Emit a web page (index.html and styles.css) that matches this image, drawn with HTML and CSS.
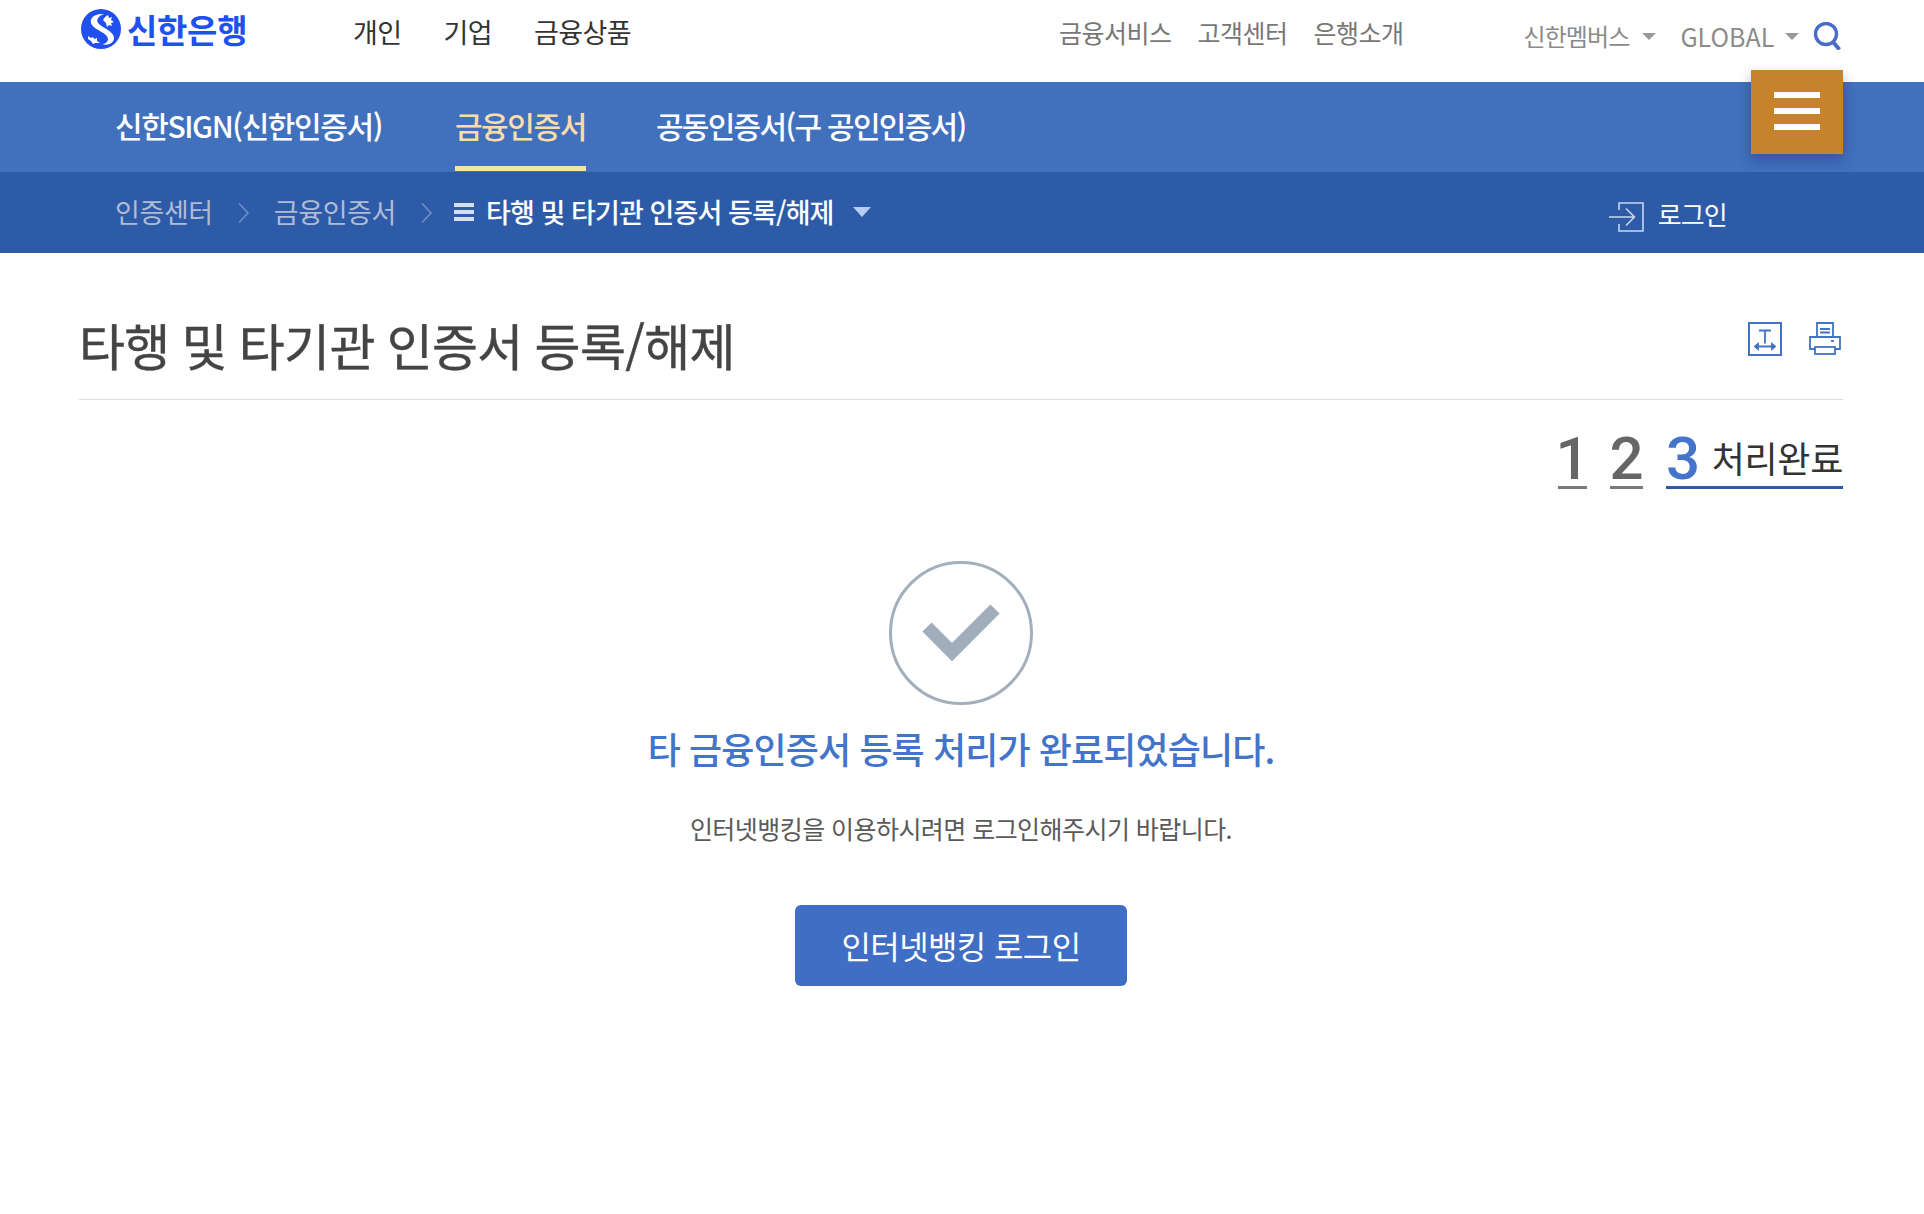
FILE: index.html
```html
<!DOCTYPE html>
<html lang="ko">
<head>
<meta charset="utf-8">
<title>타행 및 타기관 인증서 등록/해제</title>
<link rel="stylesheet" href="styles.css">
</head>
<body>
<header class="top">
  <a class="logo">
    <svg class="logo-mark" viewBox="0 0 40 40" aria-hidden="true">
      <circle cx="20" cy="20" r="20" fill="#2150f0"/>
      <path d="M23 5C13 4 7 10 11 16c3 5 16 8 16 14 0 3-3 5-6 5 6 2 12-1 12-6 0-7-12-10-16-15-2-3 0-7 6-9z" fill="#fff"/>
      <path d="M24 8l3-2 1 3 3-1-1 3 3 2-3 1 1 3-3-1-2 2-1-4-3-3z" fill="#fff"/>
      <path d="M7 27l3 2 2-1 1 2 3-1 0 3 3 2-5 0-2 1-2-3-3-2z" fill="#fff"/>
    </svg>
    <span class="logo-text">신한은행</span>
  </a>
  <nav class="gnb">
    <a>개인</a>
    <a>기업</a>
    <a>금융상품</a>
  </nav>
  <nav class="util">
    <a>금융서비스</a>
    <a>고객센터</a>
    <a>은행소개</a>
  </nav>
  <div class="extra">
    <a class="drop member">신한멤버스</a>
    <a class="drop global">GLOBAL</a>
    <svg class="search" viewBox="0 0 28 28" aria-hidden="true">
      <circle cx="13" cy="12" r="10.500" fill="none" stroke="#4a6cc8" stroke-width="3.400"/>
      <path d="M20 20l6.500 7.500" stroke="#4a6cc8" stroke-width="4" fill="none"/>
    </svg>
  </div>
  <button class="menu-btn" aria-label="전체메뉴"><i></i><i></i><i></i></button>
</header>
<nav class="tabs">
  <a>신한SIGN(신한인증서)</a>
  <a class="on">금융인증서</a>
  <a class="last">공동인증서(구 공인인증서)</a>
</nav>
<div class="crumbs">
  <a class="crumb">인증센터</a>
  <svg class="chev" viewBox="0 0 12 22" aria-hidden="true"><path d="M1.500 1.500l9 9.500-9 9.500" fill="none" stroke="#6f8fc6" stroke-width="1.600"/></svg>
  <a class="crumb">금융인증서</a>
  <svg class="chev" viewBox="0 0 12 22" aria-hidden="true"><path d="M1.500 1.500l9 9.500-9 9.500" fill="none" stroke="#6f8fc6" stroke-width="1.600"/></svg>
  <span class="lines"><i></i><i></i><i></i></span>
  <a class="current">타행 및 타기관 인증서 등록/해제</a>
  <span class="cur-caret"></span>
  <a class="login">
    <svg class="login-icon" viewBox="0 0 36 30" aria-hidden="true">
      <path d="M10 8V1h24v28H10v-7" fill="none" stroke="#c9d6ee" stroke-width="1.600"/>
      <path d="M0 15h25M17 6.500l8.500 8.500-8.500 8.500" fill="none" stroke="#c9d6ee" stroke-width="1.600"/>
    </svg>
    <span>로그인</span>
  </a>
</div>
<main class="content">
  <div class="title-row">
    <h1>타행 및 타기관 인증서 등록/해제</h1>
    <div class="tools">
      <svg class="tool-t" viewBox="0 0 34 34" aria-hidden="true">
        <rect x="1" y="1" width="32" height="32" fill="none" stroke="#4273c4" stroke-width="2"/>
        <path d="M11 8.500h12M17 8.500v13M7 24.500h20M7 24.500l3-2.500v5zM27 24.500l-3-2.500v5z" fill="none" stroke="#4273c4" stroke-width="1.800"/>
      </svg>
      <svg class="tool-p" viewBox="0 0 32 33" aria-hidden="true">
        <path d="M8 15V1h16v14M11 7h10M11 10.500h10" fill="none" stroke="#4273c4" stroke-width="1.800"/>
        <path d="M6 27H1V15h30v12h-5" fill="none" stroke="#4273c4" stroke-width="1.800"/>
        <rect x="6" y="25" width="20" height="7" fill="none" stroke="#4273c4" stroke-width="1.800"/>
        <path d="M22 19h3" stroke="#4273c4" stroke-width="1.800"/>
      </svg>
    </div>
  </div>
  <ol class="steps">
    <li class="step">1</li>
    <li class="step">2</li>
    <li class="step active">3<span>처리완료</span></li>
  </ol>
  <section class="done">
    <svg class="check" viewBox="0 0 144 144" aria-hidden="true">
      <circle cx="72" cy="72" r="70.500" fill="none" stroke="#a3afbd" stroke-width="3"/>
      <path d="M38 66l25 25 43-43" fill="none" stroke="#a0adbb" stroke-width="13" stroke-linejoin="miter"/>
    </svg>
    <h2>타 금융인증서 등록 처리가 완료되었습니다.</h2>
    <p>인터넷뱅킹을 이용하시려면 로그인해주시기 바랍니다.</p>
    <a class="btn">인터넷뱅킹 로그인</a>
  </section>
</main>
</body>
</html>
```
FILE: styles.css
```css
* { box-sizing: border-box; }
html, body { margin: 0; padding: 0; }
body {
  background: #fff;
  font-family: "Noto Sans CJK KR", "Noto Sans", sans-serif;
  color: #333;
  overflow-x: hidden;
}
a { color: inherit; text-decoration: none; }
ol { list-style: none; margin: 0; padding: 0; }

.top {
  position: relative;
  height: 82px;
  display: flex;
  align-items: flex-start;
  padding-left: 81px;
}
.logo { display: flex; align-items: center; height: 40px; margin-top: 9px; width: 272px; }
.logo-mark { width: 40px; height: 40px; flex: none; }
.logo-text {
  margin-left: 6px;
  font-size: 33px;
  line-height: 40px;
  font-weight: 700;
  letter-spacing: -0.3px;
  color: #2150f0;
  white-space: nowrap;
}
.gnb {
  display: flex;
  gap: 42px;
  margin-top: 14px;
  font-size: 27px;
  line-height: 36px;
  letter-spacing: -0.6px;
  color: #333;
}
.util {
  display: flex;
  gap: 26px;
  margin-left: 428px;
  margin-top: 14px;
  font-size: 25px;
  line-height: 36px;
  letter-spacing: -0.5px;
  color: #777;
}
.extra {
  display: flex;
  align-items: center;
  margin-left: 120px;
  margin-top: 18px;
  color: #8b8b8b;
}
.drop {
  display: flex;
  align-items: center;
  font-size: 24px;
  line-height: 36px;
  letter-spacing: -0.9px;
}
.drop::after {
  content: "";
  border-top: 7px solid #999;
  border-left: 7px solid transparent;
  border-right: 7px solid transparent;
  margin-left: 13px;
}
.member { margin-right: 24px; }
.global { font-size: 25px; letter-spacing: 0; margin-right: 14px; }
.global::after { margin-left: 11px; }
.search { width: 28px; height: 28px; }
.menu-btn {
  position: absolute;
  left: 1751px;
  top: 70px;
  z-index: 2;
  width: 92px;
  height: 84px;
  padding: 22px 23px 0;
  border: 0;
  background: #c6832b;
  box-shadow: 0 6px 12px rgba(20, 40, 90, 0.35);
  display: flex;
  flex-direction: column;
  gap: 10px;
}
.menu-btn i { display: block; width: 46px; height: 6px; background: #fff; }

.tabs {
  height: 90px;
  background: #4170bd;
  display: flex;
  gap: 73px;
  padding-left: 115px;
  color: #fff;
  font-size: 30px;
  letter-spacing: -1.4px;
}
.tabs a { height: 89px; line-height: 86px; white-space: nowrap; font-weight: 500; }
.tabs .on { color: #fbdcaa; border-bottom: 5px solid #fbdfae; }
.tabs .last { margin-left: -3px; letter-spacing: -1.7px; }

.crumbs {
  height: 81px;
  background: #2d5ba8;
  display: flex;
  align-items: center;
  padding-left: 115px;
  padding-right: 197px;
  padding-bottom: 2px;
  font-size: 27px;
  letter-spacing: -0.4px;
  color: #aebcd6;
}
.chev { width: 13px; height: 22px; margin: 2px 24px 0 24px; flex: none; }
.lines { display: flex; flex-direction: column; gap: 3px; width: 20px; margin: 0 12px 0 -3px; flex: none; }
.lines i { display: block; height: 4px; background: #d5deee; }
.current { color: #fff; white-space: nowrap; font-weight: 500; letter-spacing: -0.9px; }
.cur-caret {
  border-top: 10px solid #b5cdf0;
  border-left: 9px solid transparent;
  border-right: 9px solid transparent;
  margin-left: 19px;
}
.login { margin-left: auto; margin-top: 4px; display: flex; align-items: center; color: #fff; font-size: 26px; letter-spacing: -0.8px; }
.login-icon { width: 36px; height: 30px; margin: 6px 13px 0 0; }

.content { padding: 0 81px 0 79px; }
.title-row {
  height: 147px;
  border-bottom: 1px solid #ddd;
  display: flex;
  justify-content: space-between;
  align-items: flex-start;
}
h1 {
  margin: 57px 0 0;
  font-size: 50px;
  line-height: 68px;
  font-weight: 400;
  letter-spacing: -0.65px;
  word-spacing: -1.5px;
  -webkit-text-stroke: 0.4px #444;
  color: #444;
  white-space: nowrap;
}
.tools { display: flex; gap: 27px; margin-top: 69px; padding-right: 2px; }
.tool-t { width: 34px; height: 34px; }
.tool-p { width: 32px; height: 33px; }

.steps { display: flex; justify-content: flex-end; gap: 23px; margin-top: 25px; height: 64px; }
.step {
  width: 33px;
  height: 64px;
  padding-top: 4px;
  border-bottom: 3px solid #7a7a7a;
  font-family: "Roboto", "Liberation Sans", sans-serif;
  font-size: 60px;
  font-weight: 500;
  line-height: 60px;
  color: #666;
  display: flex;
  justify-content: center;
  align-items: flex-start;
}
.step:first-child { width: 29px; }
.step.active { width: 177px; justify-content: space-between; color: #4475cb; border-bottom-color: #2d5ba8; }
.step span {
  font-family: "Noto Sans CJK KR", sans-serif;
  font-size: 36px;
  font-weight: 400;
  line-height: 56px;
  letter-spacing: -0.3px;
  color: #333;
}

.done { display: flex; flex-direction: column; align-items: center; margin-top: 72px; }
.check { width: 144px; height: 144px; }
h2 {
  margin: 18px 0 0;
  font-size: 36px;
  line-height: 50px;
  font-weight: 500;
  letter-spacing: -0.9px;
  color: #4274c9;
  white-space: nowrap;
}
.done p {
  margin: 37px 0 0;
  font-size: 25px;
  line-height: 36px;
  letter-spacing: -0.55px;
  color: #5a5a5a;
}
.btn {
  margin-top: 59px;
  width: 332px;
  height: 81px;
  border-radius: 6px;
  background: #3f6ec4;
  color: #fff;
  font-size: 32px;
  line-height: 80px;
  letter-spacing: -0.6px;
  text-align: center;
}
```
